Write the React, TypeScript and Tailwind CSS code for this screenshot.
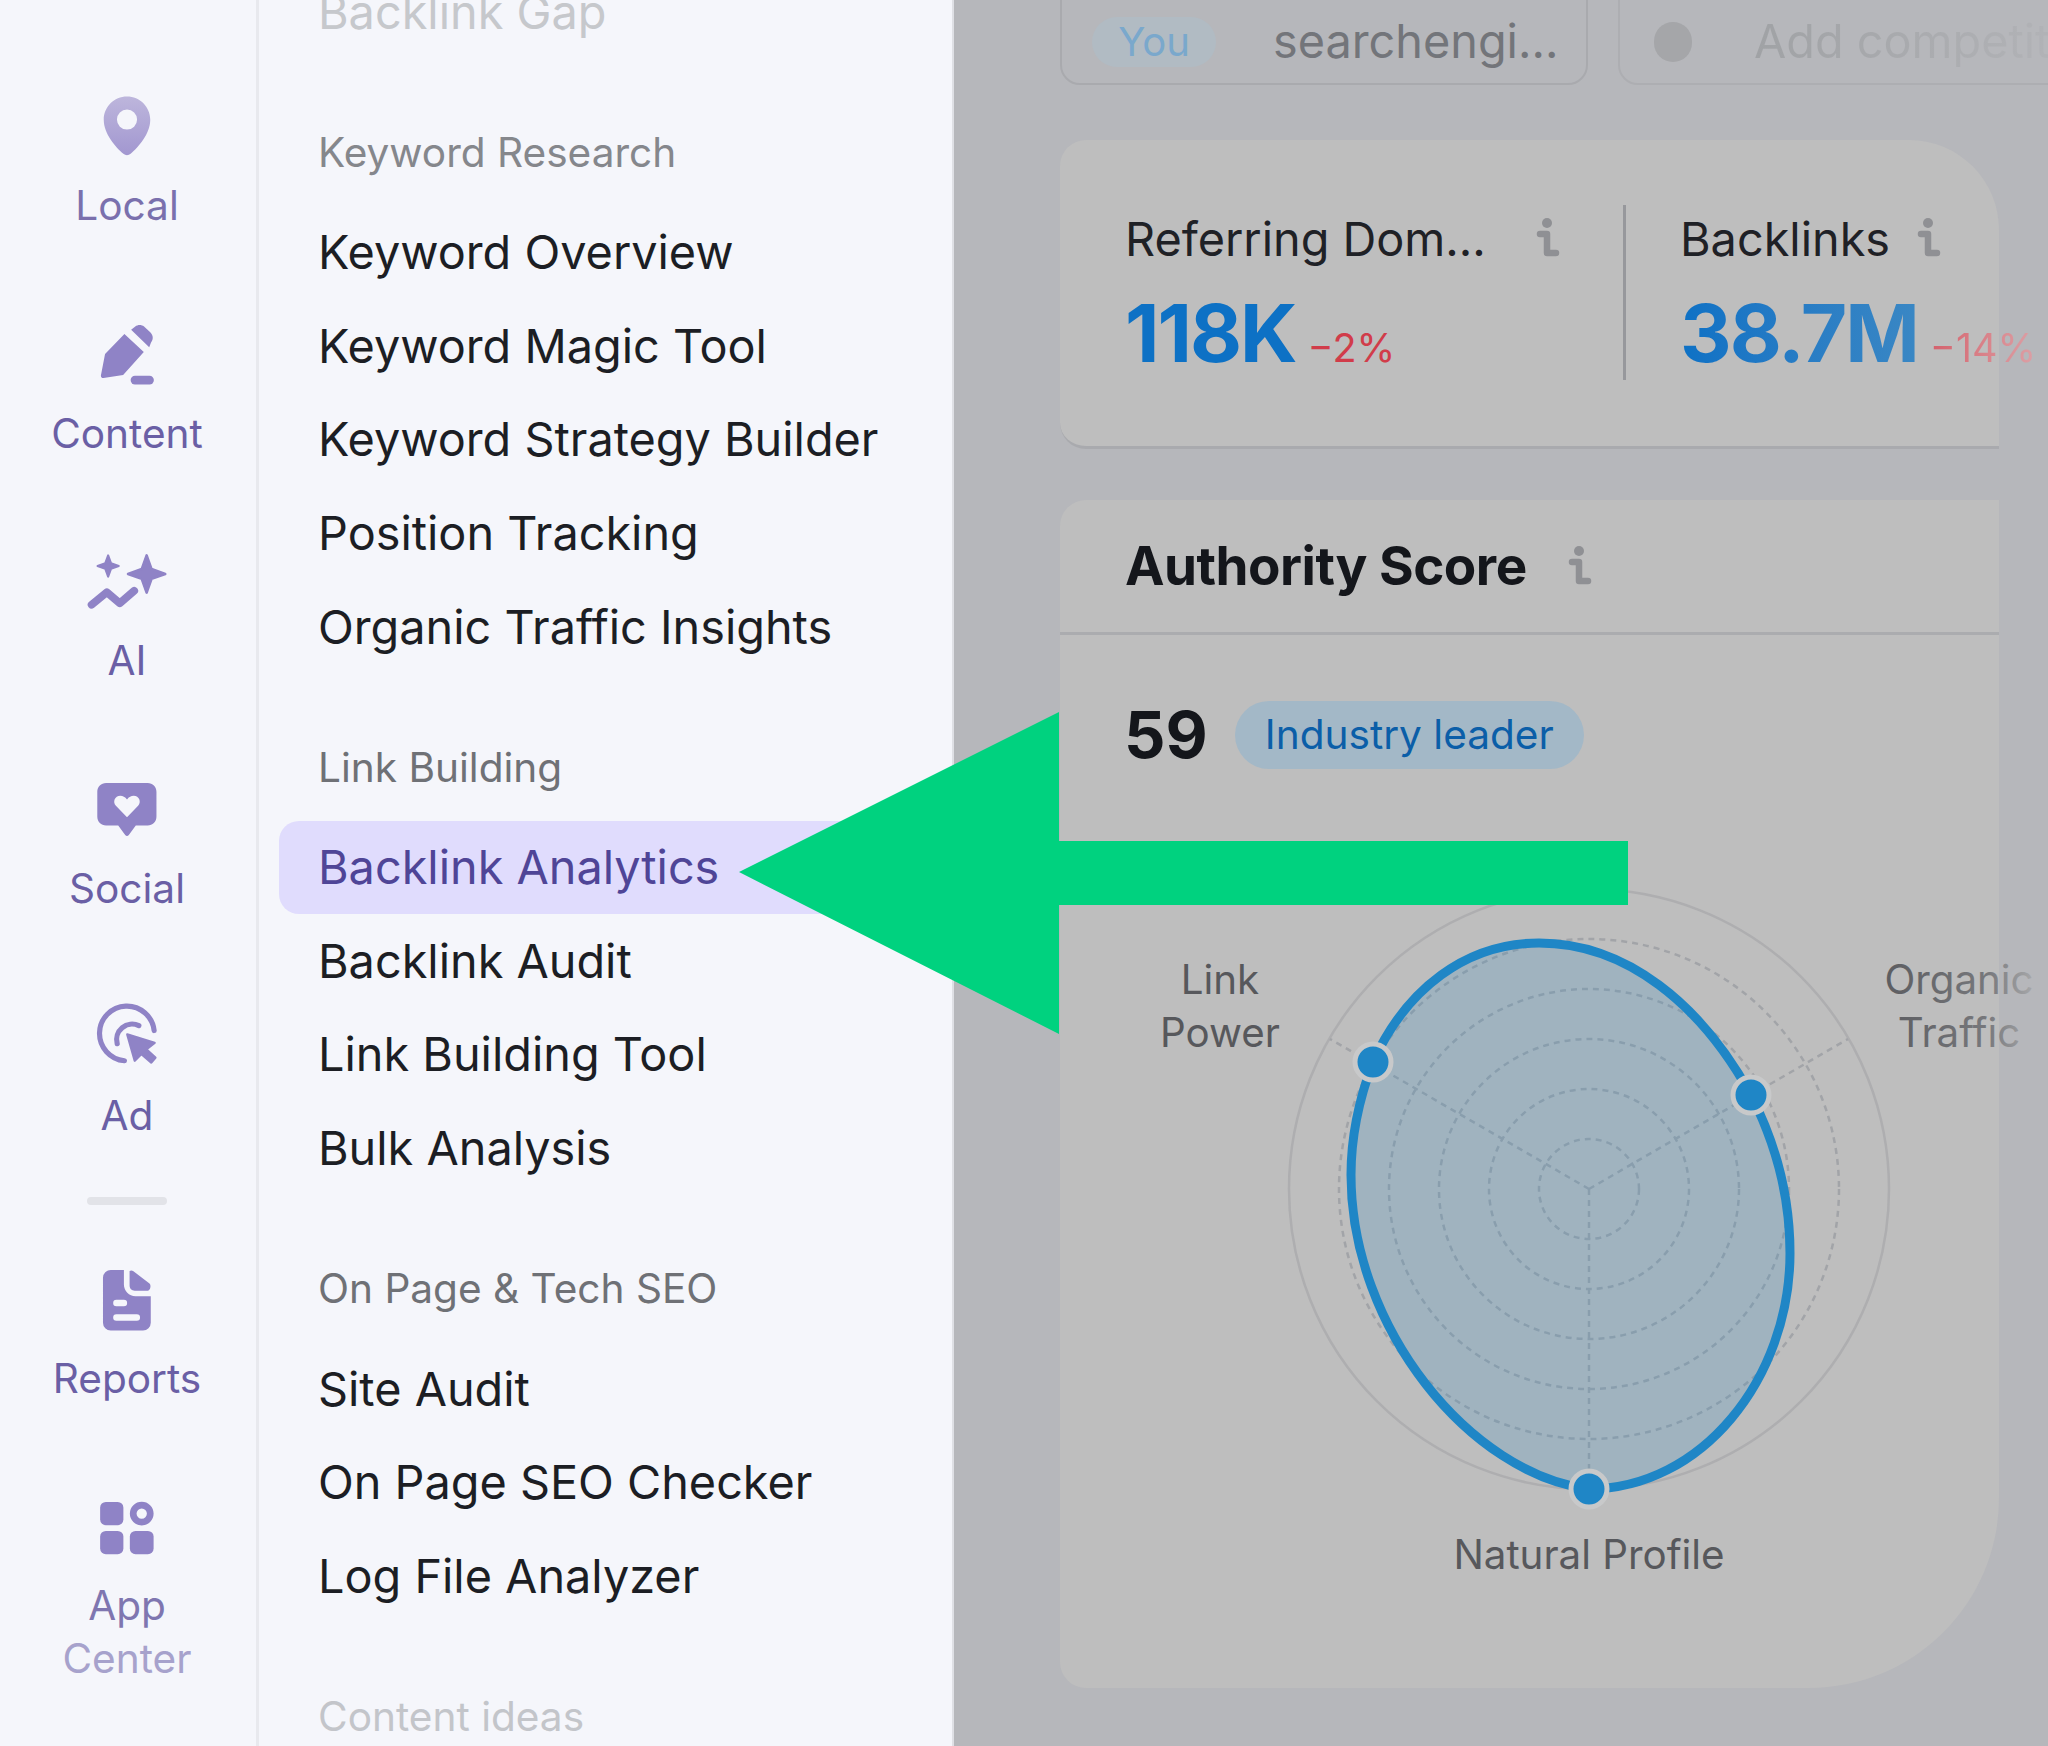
import React from "react";

type MenuGroup = { title: string; tone: string; items: string[]; };

const menuGroups: MenuGroup[] = [
  { title: "Keyword Research", tone: "text-[#85878c]", items: ["Keyword Overview", "Keyword Magic Tool", "Keyword Strategy Builder", "Position Tracking", "Organic Traffic Insights"] },
  { title: "Link Building", tone: "text-[#6f7176]", items: ["Backlink Analytics", "Backlink Audit", "Link Building Tool", "Bulk Analysis"] },
  { title: "On Page & Tech SEO", tone: "text-[#6f7176]", items: ["Site Audit", "On Page SEO Checker", "Log File Analyzer"] },
];

function RailIcon({ children }: { children: React.ReactNode }) {
  return (
    <svg viewBox="0 0 24 24" className="w-[62px] h-[62px] overflow-visible text-[#8f83c6]" fill="currentColor">
      {children}
    </svg>
  );
}

function RailItem({ icon, label, tone }: { icon: React.ReactNode; label: string; tone: string }) {
  return (
    <div className="flex flex-col items-center gap-[21px]">
      {icon}
      <div className={`text-[40.6px] leading-[53px] text-center ${tone}`}>{label}</div>
    </div>
  );
}

function InfoIcon({ className }: { className?: string }) {
  return (
    <svg viewBox="0 0 24 44" className={`w-[24px] h-[44px] shrink-0 ${className ?? ""}`}>
      <circle cx="11" cy="6" r="5" fill="#8f9094" />
      <path d="M4 17H11V36H20" fill="none" stroke="#8f9094" strokeWidth="6.5" strokeLinecap="round" strokeLinejoin="round" />
    </svg>
  );
}

function Rail() {
  return (
    <div className="w-[259px] shrink-0 border-r-[3px] border-[#e8e9ee] flex flex-col items-center pt-[96px] pr-[2px]">
      <div className="flex flex-col items-center gap-[91.5px]">
        <RailItem
          label="Local"
          tone="text-[#7a70ad]"
          icon={
            <RailIcon>
              <defs>
                <linearGradient id="pinFade" x1="0" y1="0" x2="0" y2="1">
                  <stop offset="0%" stopColor="#bdb6dc" />
                  <stop offset="100%" stopColor="#a297d0" />
                </linearGradient>
              </defs>
              <path
                fillRule="evenodd"
                fill="url(#pinFade)"
                d="M12 .2C7 .2 3 4.2 3 9.2c0 5.4 4.6 10.6 7.6 13.2.8.7 2 .7 2.8 0C16.400 19.800 21 14.600 21 9.200 21 4.200 17 .2 12 .2ZM12 5.200a3.900 3.900 0 1 1 0 7.800 3.900 3.900 0 0 1 0-7.800Z"
              />
            </RailIcon>
          }
        />
        <RailItem
          label="Content"
          tone="text-[#6a5fa5]"
          icon={
            <RailIcon>
              <path d="M3.500 11.600 11 3.900l7.500 6.900-8 8.900-7.600 1.200c-.6.1-1.100-.4-1-1z" />
              <path d="M13.600 2.200l1.600-1.200c1-.8 2.400-.8 3.400 0l2.400 2.200c1.200 1.100 1.300 2.800.3 4L20.600 9z" />
              <rect x="13.400" y="20" width="9" height="3.400" rx="1.700" />
            </RailIcon>
          }
        />
        <RailItem
          label="AI"
          tone="text-[#6a5fa5]"
          icon={
            <RailIcon>
              <path stroke="currentColor" strokeWidth="1" strokeLinejoin="round" d="M19.600 1.700 21.500 7 26.800 8.900 21.500 10.800 19.600 16.100 17.700 10.800 12.400 8.900 17.700 7Z" />
              <path stroke="currentColor" strokeWidth=".8" strokeLinejoin="round" d="M4.700 1.700 5.800 4.700 8.800 5.800 5.800 6.900 4.700 9.900 3.600 6.900 .6 5.800 3.600 4.700Z" />
              <path d="M-1.700 20.800 4.200 16 9.200 20.200 14.800 15.400" fill="none" stroke="currentColor" strokeWidth="3" strokeLinecap="round" strokeLinejoin="round" />
            </RailIcon>
          }
        />
        <RailItem
          label="Social"
          tone="text-[#6a5fa5]"
          icon={
            <RailIcon>
              <path
                fillRule="evenodd"
                d="M3.900 1.500H20c1.900 0 3.400 1.500 3.400 3.400v9.700c0 1.900-1.500 3.400-3.400 3.400h-4.600l-2.700 3.700c-.4.500-1 .5-1.400 0L8.600 18H3.900C2 18 .5 16.500.5 14.600V4.900C.5 3 2 1.500 3.900 1.500ZM12 14.800l4.300-4.400c1.400-1.500.4-3.900-1.700-3.900-1 0-1.900.5-2.600 1.400-.7-.9-1.600-1.400-2.600-1.400-2.100 0-3.100 2.400-1.700 3.900z"
              />
            </RailIcon>
          }
        />
        <RailItem
          label="Ad"
          tone="text-[#6a5fa5]"
          icon={
            <RailIcon>
              <path d="M22.500 9.500A10.600 10.600 0 1 0 11 21.200" fill="none" stroke="currentColor" strokeWidth="2" strokeLinecap="round" />
              <path d="M16.600 7.600A6 6 0 0 0 8.200 14.600" fill="none" stroke="currentColor" strokeWidth="2" strokeLinecap="round" />
              <path stroke="currentColor" strokeWidth=".9" strokeLinejoin="round" d="M12.100 11 22.700 14.300 19.500 16.800 23 20 21.400 21.900 17.600 18.600 15 21.200Z" />
            </RailIcon>
          }
        />
      </div>
      <div className="mt-[55px] mb-[64px] w-[80px] h-[8px] rounded-full bg-[#e2e3e8]" />
      <div className="flex flex-col items-center gap-[91px]">
        <RailItem
          label="Reports"
          tone="text-[#6a5fa5]"
          icon={
            <RailIcon>
              <path
                fillRule="evenodd"
                d="M5.700.4H10.800V6c0 2.500 2 4.500 4.500 4.500H21.200V20.800a3 3 0 0 1-3 3H5.700a3 3 0 0 1-3-3V3.400a3 3 0 0 1 3-3ZM7.900 11.900a1.250 1.250 0 0 0 0 2.500H10.800a1.250 1.250 0 0 0 0-2.500ZM7.900 17.500a1.250 1.250 0 0 0 0 2.500H15.800a1.250 1.250 0 0 0 0-2.500Z"
              />
              <path d="M13 .8c.5-.4 1-.3 1.500.1L20.700 5.600c.8.700.3 2.800-.7 2.800H15c-1.200 0-2-.9-2-2z" />
            </RailIcon>
          }
        />
        <div className="flex flex-col items-center gap-[21px]">
          <RailIcon>
            <rect x="1.600" y="2.300" width="9" height="9" rx="2.200" />
            <path fillRule="evenodd" d="M17.700 2.200a4.600 4.600 0 1 1 0 9.200 4.600 4.600 0 0 1 0-9.200ZM17.700 4.800a2 2 0 1 0 0 4 2 2 0 0 0 0-4Z" />
            <rect x="1.600" y="13.500" width="9" height="9" rx="2.200" />
            <rect x="13.100" y="13.500" width="9.200" height="9" rx="2.200" />
          </RailIcon>
          <div className="text-[40.6px] leading-[53px] text-center">
            <div className="text-[#7f76b0]">App</div>
            <div className="text-[#a7a2cc]">Center</div>
          </div>
        </div>
      </div>
    </div>
  );
}

function MenuPanel() {
  return (
    <div className="w-[695px] shrink-0 border-r-2 border-[#dfe0e5] flex flex-col gap-[43px] -mt-[35px]">
      <div className="h-[93.6px] shrink-0 pl-[59px] flex items-center text-[46.8px] text-[#c6c8cc]">Backlink Gap</div>
      {menuGroups.map((group) => (
        <div key={group.title} className="shrink-0">
          <div className={`h-[104px] pl-[59px] flex items-center text-[40.6px] ${group.tone}`}>{group.title}</div>
          {group.items.map((item) => (
            <div
              key={item}
              className={
                item === "Backlink Analytics"
                  ? "h-[93.6px] ml-[20px] mr-[20px] pl-[39px] flex items-center text-[46.8px] rounded-[20px] bg-[#e0dcfd] text-[#4f4597]"
                  : "h-[93.6px] pl-[59px] flex items-center text-[46.8px] text-[#1c1e24]"
              }
            >
              {item}
            </div>
          ))}
        </div>
      ))}
      <div className="h-[104px] shrink-0 pl-[59px] flex items-center text-[40.6px] text-[#c3c5ca]">Content ideas</div>
    </div>
  );
}

function RadarChart() {
  const rings = [50, 100, 150, 200, 250];
  return (
    <svg viewBox="1059 880 989 720" className="block w-[989px] h-[720px] mt-[110px] overflow-visible">
      <defs>
        <linearGradient id="organicFade" gradientUnits="userSpaceOnUse" x1="1880" y1="0" x2="2032" y2="0">
          <stop offset="0%" stopColor="#5b5c60" />
          <stop offset="70%" stopColor="#77787c" />
          <stop offset="100%" stopColor="#a6a7a9" />
        </linearGradient>
      </defs>
      <circle cx="1588" cy="1190" r="300" fill="none" stroke="#aeaeb0" strokeWidth="2.500" />
      {rings.map((r) => (
        <circle key={r} cx="1588" cy="1190" r={r} fill="none" stroke="#a2a4a8" strokeWidth="2.500" strokeDasharray="6 5" />
      ))}
      <path d="M1588 1190V1490M1588 1190L1329 1040M1588 1190L1847 1040" fill="none" stroke="#a2a4a8" strokeWidth="2.500" strokeDasharray="6 5" />
      <path
        d="M1372 1063C1405 990 1465 944 1538 944C1625 944 1700 1005 1750 1096C1775 1145 1789 1195 1789 1254C1789 1380 1700 1490 1588 1490C1470 1475 1350 1330 1350 1176C1350 1135 1358 1100 1372 1063Z"
        fill="#1c86c8"
        fillOpacity="0.18"
        stroke="#1f86c6"
        strokeWidth="9"
      />
      <circle cx="1372" cy="1063" r="18" fill="#1f86c6" stroke="#c8c9ca" strokeWidth="5" />
      <circle cx="1750" cy="1096" r="18" fill="#1f86c6" stroke="#c8c9ca" strokeWidth="5" />
      <circle cx="1588" cy="1490" r="18" fill="#1f86c6" stroke="#c8c9ca" strokeWidth="5" />
      <g fontSize="40.300" textAnchor="middle" dominantBaseline="middle" fill="#57585c">
        <text x="1219" y="984">Link</text>
        <text x="1219" y="1037">Power</text>
        <text x="1958" y="984" fill="url(#organicFade)">Organic</text>
        <text x="1958" y="1037" fill="url(#organicFade)">Traffic</text>
        <text x="1588" y="1559">Natural Profile</text>
      </g>
    </svg>
  );
}

function RightPanel() {
  return (
    <div className="flex-1 min-w-0 bg-[#b6b7bb] pl-[106px] overflow-hidden">
      <div className="flex gap-[30px] -mt-[20px] w-[1200px]">
        <div className="w-[528px] h-[105px] shrink-0 rounded-[20px] border-2 border-[#a9aaae] flex items-center pl-[30px] pt-[18px]">
          <div className="w-[124px] h-[50px] rounded-full bg-[#b1bbc3] flex items-center justify-center text-[40px] text-[#7aa8cc]">You</div>
          <div className="ml-[57px] text-[46.8px] text-[#73757a]">searchengi...</div>
        </div>
        <div className="w-[620px] h-[105px] shrink-0 rounded-[20px] border-2 border-[#adaeb2] flex items-center pl-[34px] pt-[18px]">
          <div className="w-[38px] h-[40px] rounded-full bg-[#a5a6a9]" />
          <div className="ml-[62px] text-[46.8px] bg-gradient-to-r from-[#a0a2a5] to-[#b4b5b9] bg-clip-text text-transparent">Add competitor</div>
        </div>
      </div>
      <div className="mt-[55px] w-[939px] h-[309px] bg-[#bebebe] rounded-l-[26px] rounded-tr-[90px] border-b-[3px] border-[#a9aaae] pl-[65px] pt-[65px] flex">
        <div className="w-[501px] h-[175px] shrink-0 border-r-[3px] border-[#97989c] pt-[7px]">
          <div className="h-[54px] flex items-center text-[46.8px] text-[#1f2126]">
            <span>Referring Dom...</span>
            <InfoIcon className="ml-[50px]" />
          </div>
          <div className="mt-[20px] flex items-baseline">
            <span className="text-[80px] leading-[94px] font-bold tracking-[-2px] text-[#0d71c5]">118K</span>
            <span className="ml-[12px] text-[39.5px] text-[#d13c4a]">−2%</span>
          </div>
        </div>
        <div className="pl-[54px] pt-[7px]">
          <div className="h-[54px] flex items-center text-[46.8px] text-[#1f2126]">
            <span>Backlinks</span>
            <InfoIcon className="ml-[27px]" />
          </div>
          <div className="mt-[20px] flex items-baseline">
            <span className="text-[80px] leading-[94px] font-bold tracking-[-2px] bg-gradient-to-r from-[#0d71c5] to-[#3a87c4] bg-clip-text text-transparent">38.7M</span>
            <span className="ml-[12px] text-[39.5px] bg-gradient-to-r from-[#d4606c] to-[#dba0a6] bg-clip-text text-transparent">−14%</span>
          </div>
        </div>
      </div>
      <div className="mt-[51px] w-[939px] h-[1188px] bg-[#bebebe] rounded-l-[26px] rounded-br-[190px]">
        <div className="h-[135px] pl-[65px] pt-[2px] border-b-[3px] border-[#abacaf] flex items-center">
          <span className="text-[53px] font-bold tracking-[-0.5px] text-[#14161b]">Authority Score</span>
          <InfoIcon className="ml-[41px]" />
        </div>
        <div className="mt-[66px] pl-[64px] flex items-center h-[68px]">
          <span className="text-[65px] font-bold text-[#14161b]">59</span>
          <span className="ml-[27px] h-[68px] pl-[30px] pr-[30px] rounded-full bg-[#a3b8c7] flex items-center text-[40.6px] text-[#0b5ea8]">Industry leader</span>
        </div>
        <RadarChart />
      </div>
    </div>
  );
}

export default function App() {
  return (
    <div className="relative w-[2048px] h-[1746px] flex overflow-hidden bg-[#f5f6fb] font-['Inter',sans-serif]">
      <Rail />
      <MenuPanel />
      <RightPanel />
      {/* big green pointer laid over the screenshot */}
      <svg viewBox="0 0 2048 1746" className="absolute inset-0 w-[2048px] h-[1746px] pointer-events-none">
        <polygon points="739,872 1059,712 1059,841 1628,841 1628,905 1059,905 1059,1034" fill="#00d27f" />
      </svg>
    </div>
  );
}
